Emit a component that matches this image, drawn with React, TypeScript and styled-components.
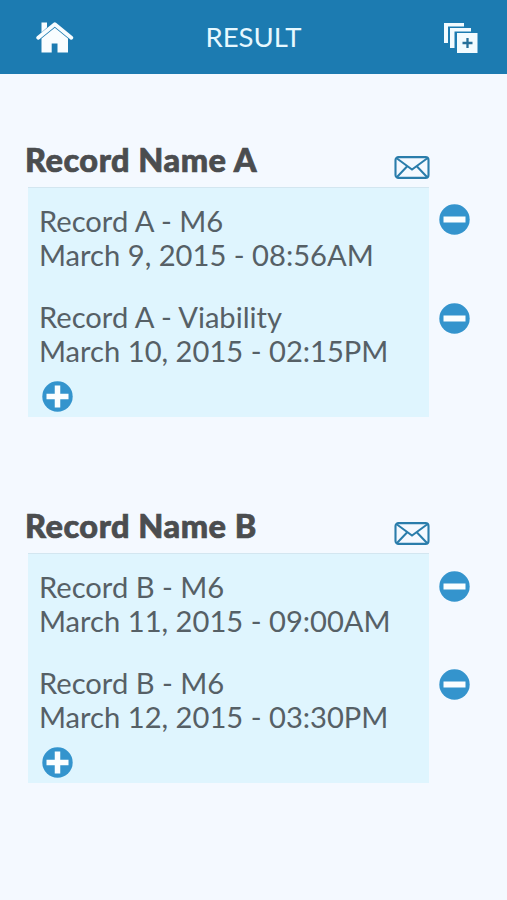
import React from 'react';
import styled, { createGlobalStyle } from 'styled-components';

const GlobalStyle = createGlobalStyle`
  * { box-sizing: border-box; }
  body { margin: 0; background: #f4f9ff; font-family: Lato, sans-serif; }
`;
const Screen = styled.div`
  width: 507px;
  height: 900px;
  background: #f4f9ff;
  overflow: hidden;
`;
const Header = styled.header`
  height: 74px;
  background: #1c7bb1;
  display: grid;
  grid-template-columns: 38px 1fr 34px;
  align-items: center;
  padding: 0 29px 0 36px;
`;
const Title = styled.h1`
  margin: 0;
  padding-right: 11px;
  text-align: center;
  color: #e6f8ff;
  font-weight: 400;
  font-size: 27.5px;
  line-height: 34px;
`;
const Content = styled.main`
  display: flex;
  flex-direction: column;
  gap: 91px;
  padding: 68px 0 0 25px;
`;
const Section = styled.section`
  display: flex;
  flex-direction: column;
`;
const SectionHead = styled.div`
  width: 405px;
  height: 45px;
  display: flex;
  justify-content: space-between;
`;
const Name = styled.h2`
  margin: 0;
  color: #4b4d4f;
  font-weight: 900;
  font-size: 32.5px;
  letter-spacing: 0.5px;
  -webkit-text-stroke: 0.7px #4b4d4f;
  line-height: 36px;
  white-space: nowrap;
`;
const MailButton = styled.button`
  border: 0;
  padding: 13px 0 0;
  background: none;
  height: 38px;
`;
const Body = styled.div`
  display: flex;
  gap: 10px;
  padding-left: 3px;
`;
const Panel = styled.div`
  width: 401px;
  height: 230px;
  background: #dff5fe;
  border-top: 1px solid #d3e6f0;
  padding: 16px 0 0 11px;
`;
const Entry = styled.div`
  height: 96px;
  color: #566066;
  font-size: 29.15px;
  line-height: 34.4px;
  white-space: nowrap;
`;
const Removes = styled.div<{ $top: number; $gap: number }>`
  display: flex;
  flex-direction: column;
  gap: ${(p) => p.$gap}px;
  padding-top: ${(p) => p.$top}px;
`;
const RoundButton = styled.button`
  display: block;
  border: 0;
  padding: 0;
  background: none;
  width: 31px;
  height: 31px;
`;
const AddButton = styled(RoundButton)`
  margin: -15px 0 0 3px;
`;
const Icon = styled.svg`
  display: block;
`;

const Home = () => (
  <Icon width="38" height="32" viewBox="0 0 38 32" fill="#f8fdff">
    <path d="M5.500 1.500h5.500v5l-5.500 5z" />
    <path d="M2.200 16.800 18.800 3.200 35.300 16.800" fill="none" stroke="#f8fdff" strokeWidth="3.800" strokeLinecap="round" strokeLinejoin="round" />
    <path d="M5.500 17.500 18.800 6.800 32 17.500v14H21.500V22.500h-5.800v9H5.500z" />
  </Icon>
);
const AddRecord = () => (
  <Icon width="34" height="32" viewBox="0 0 34 32" fill="#f2fbff">
    <path d="M0 2h20v3.500H4V22H0z" />
    <path d="M6 7h21v3.500H10.500V27H6z" />
    <path d="M13 12h20.500v20H13z" />
    <path d="M23.500 17v10M18.500 22h10" stroke="#266f99" strokeWidth="2.300" />
  </Icon>
);
const Mail = () => (
  <Icon width="36" height="23" viewBox="0 0 36 23" fill="none" stroke="#2a7dab" strokeWidth="2.100">
    <rect x="1.500" y="1.100" width="33" height="20.800" rx="3" />
    <path d="M3 2.500 18 13.500 33 2.500M3 21l10-10.500M33 21 23 10.500" strokeWidth="2" />
  </Icon>
);
const Circle = ({ plus = false }: { plus?: boolean }) => (
  <Icon width="31" height="31" viewBox="0 0 31 31">
    <circle cx="15.500" cy="15.500" r="15.200" fill="#3494cd" />
    <path d={plus ? 'M4.500 15.500h22M15.500 4.500v22' : 'M4.500 15.500h22'} stroke="#fbfeff" strokeWidth={plus ? 5.5 : 6} />
  </Icon>
);

const groups = [
  {
    name: 'Record Name A',
    top: 17,
    gap: 68,
    entries: [['Record A - M6', 'March 9, 2015 - 08:56AM'], ['Record A - Viability', 'March 10, 2015 - 02:15PM']],
  },
  {
    name: 'Record Name B',
    top: 18,
    gap: 67,
    entries: [['Record B - M6', 'March 11, 2015 - 09:00AM'], ['Record B - M6', 'March 12, 2015 - 03:30PM']],
  },
];

export default function App() {
  return (
    <Screen>
      <GlobalStyle />
      <Header><Home /><Title>RESULT</Title><AddRecord /></Header>
      <Content>
        {groups.map((g) => (
          <Section key={g.name}>
            <SectionHead><Name>{g.name}</Name><MailButton aria-label="Email"><Mail /></MailButton></SectionHead>
            <Body>
              <Panel>
                {g.entries.map(([t, d]) => <Entry key={d}><div>{t}</div><div>{d}</div></Entry>)}
                <AddButton aria-label="Add"><Circle plus /></AddButton>
              </Panel>
              <Removes $top={g.top} $gap={g.gap}>
                {g.entries.map(([, d]) => <RoundButton key={d} aria-label="Remove"><Circle /></RoundButton>)}
              </Removes>
            </Body>
          </Section>
        ))}
      </Content>
    </Screen>
  );
}
